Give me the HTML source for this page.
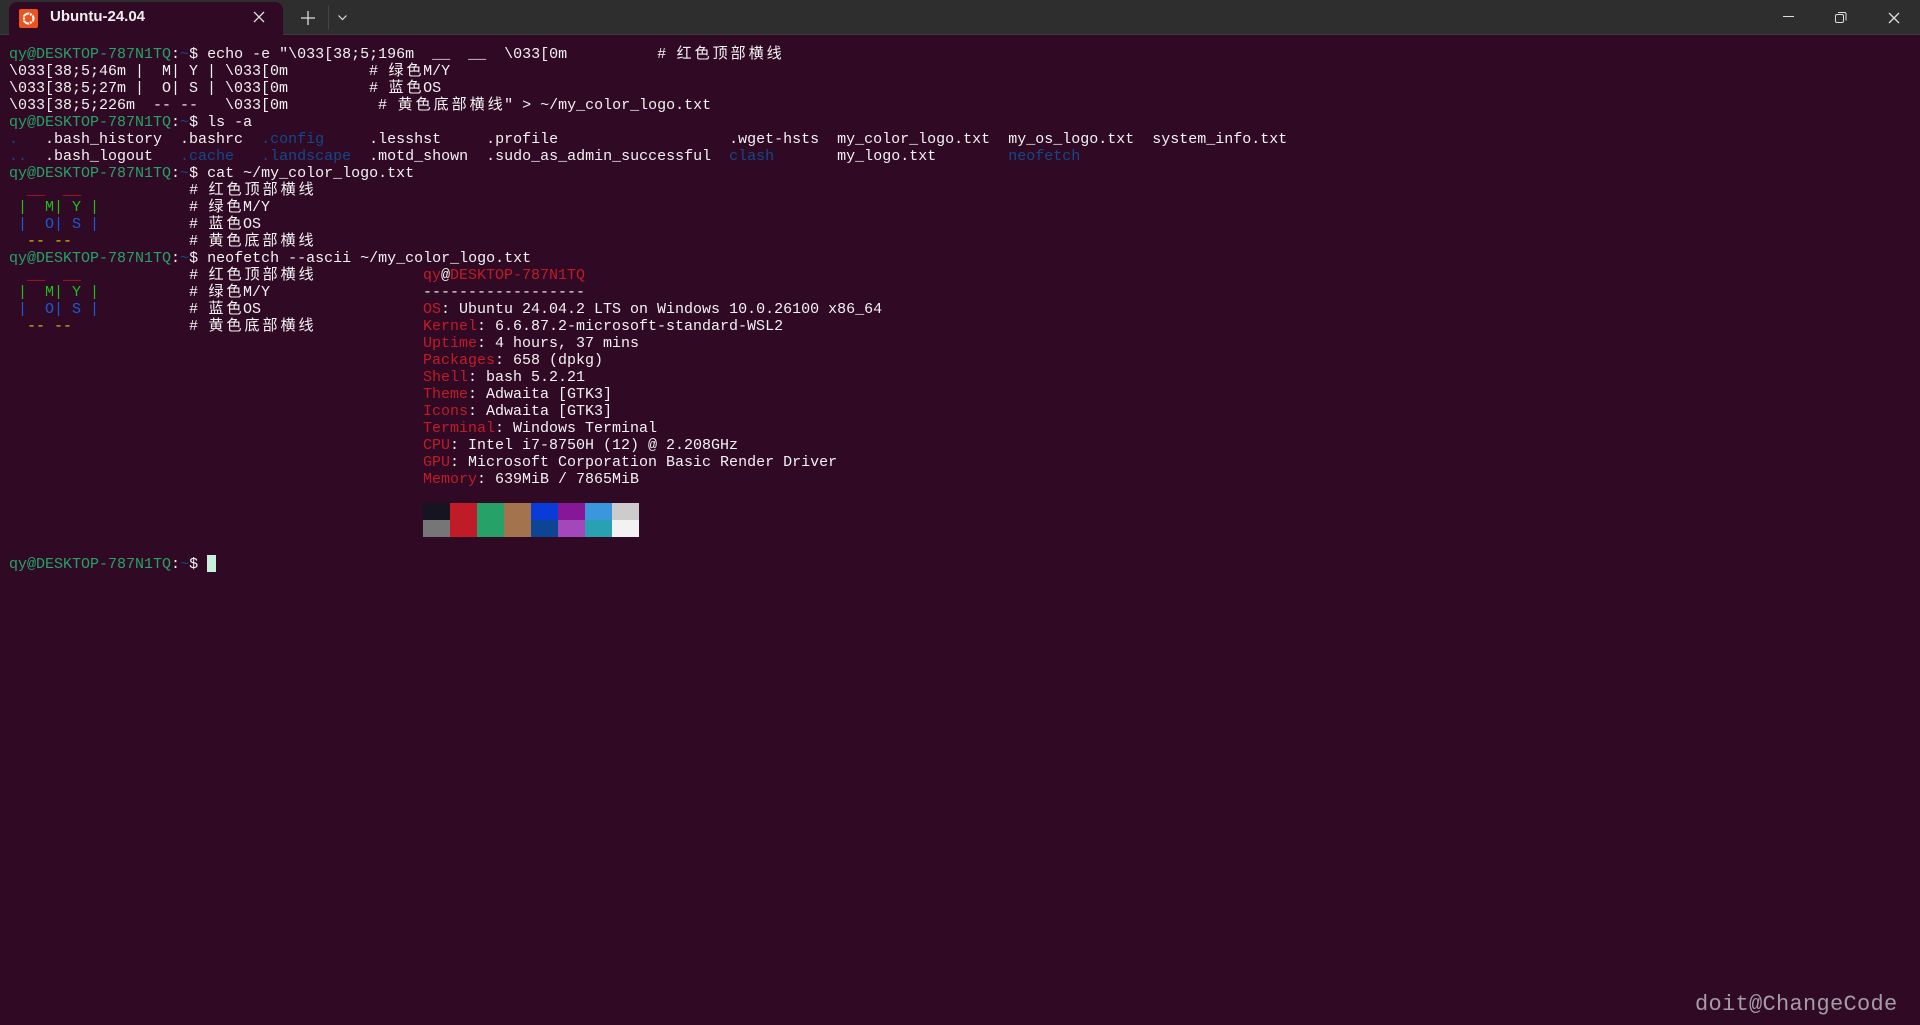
<!DOCTYPE html>
<html><head><meta charset="utf-8"><style>
*{margin:0;padding:0;box-sizing:border-box}
body{width:1920px;height:1025px;background:#300a24;overflow:hidden;position:relative;font-family:"Liberation Mono","Noto Sans CJK SC",monospace}
.bar{position:absolute;left:0;top:0;width:1920px;height:35px;background:#2e2e2e;border-bottom:1px solid #3a3a3a}
.tab{position:absolute;left:9px;top:2px;width:274px;height:34px;background:#300a24;border-radius:8px 8px 0 0}
.ico{position:absolute;left:19px;top:9px;width:19px;height:19px;background:#e95420;border-radius:2px}
.tt{position:absolute;left:50px;top:8px;font-family:"Liberation Sans",sans-serif;font-size:15px;font-weight:bold;color:#eee}
pre{position:absolute;font-family:"Liberation Mono","Noto Sans CJK SC",monospace;font-size:15px;line-height:17px;color:#f2f2f2;white-space:pre}
.g{color:#26a269}.b{color:#12488b}.r{color:#c01c28}
.c{display:inline-block;width:18px;text-align:center}
.lr{color:#c01c28}.lg{color:#1dbf1d}.lb{color:#1a5ad8}.ly{color:#d8c800}
.sw{position:absolute;width:27px;height:17px}
</style></head><body>
<div class="bar"></div>
<div class="tab"></div>
<div class="ico"><svg width="19" height="19" viewBox="0 0 19 19"><circle cx="9.5" cy="9.5" r="5" fill="none" stroke="#fff" stroke-width="2"/><circle cx="5" cy="9.5" r="1.6" fill="#fff" stroke="#e95420" stroke-width="0.8"/><circle cx="11.8" cy="5.5" r="1.6" fill="#fff" stroke="#e95420" stroke-width="0.8"/><circle cx="11.8" cy="13.5" r="1.6" fill="#fff" stroke="#e95420" stroke-width="0.8"/></svg></div>
<div class="tt">Ubuntu-24.04</div>
<svg style="position:absolute;left:253px;top:11px" width="12" height="12"><path d="M1 1L11 11M11 1L1 11" stroke="#ddd" stroke-width="1.3"/></svg>
<svg style="position:absolute;left:301px;top:11px" width="14" height="14"><path d="M7 0V14M0 7H14" stroke="#ddd" stroke-width="1.3"/></svg>
<div style="position:absolute;left:328px;top:6px;width:1px;height:24px;background:#444"></div>
<svg style="position:absolute;left:338px;top:15px" width="9" height="6"><path d="M0.5 0.5L4.5 4.5L8.5 0.5" stroke="#ddd" stroke-width="1.2" fill="none"/></svg>
<div style="position:absolute;left:1783px;top:16px;width:11px;height:1px;background:#ddd"></div>
<svg style="position:absolute;left:1835px;top:12px" width="12" height="12"><rect x="0.5" y="2.5" width="8" height="8" rx="1.5" fill="none" stroke="#ddd"/><path d="M3 0.5H9.5A1.5 1.5 0 0 1 11 2V8.5" fill="none" stroke="#ddd"/></svg>
<svg style="position:absolute;left:1888px;top:12px" width="12" height="12"><path d="M1 1L11 11M11 1L1 11" stroke="#ddd" stroke-width="1.3"/></svg>

<pre style="left:9px;top:45.5px"><span class="g">qy@DESKTOP-787N1TQ</span>:<span class="b">~</span>$ echo -e "\033[38;5;196m  __  __  \033[0m          # <span class="c">红</span><span class="c">色</span><span class="c">顶</span><span class="c">部</span><span class="c">横</span><span class="c">线</span>
\033[38;5;46m |  M| Y | \033[0m         # <span class="c">绿</span><span class="c">色</span>M/Y
\033[38;5;27m |  O| S | \033[0m         # <span class="c">蓝</span><span class="c">色</span>OS
\033[38;5;226m  -- --   \033[0m          # <span class="c">黄</span><span class="c">色</span><span class="c">底</span><span class="c">部</span><span class="c">横</span><span class="c">线</span>" &gt; ~/my_color_logo.txt
<span class="g">qy@DESKTOP-787N1TQ</span>:<span class="b">~</span>$ ls -a
<span class="b">.</span>   .bash_history  .bashrc  <span class="b">.config</span>     .lesshst     .profile                   .wget-hsts  my_color_logo.txt  my_os_logo.txt  system_info.txt
<span class="b">..</span>  .bash_logout   <span class="b">.cache</span>   <span class="b">.landscape</span>  .motd_shown  .sudo_as_admin_successful  <span class="b">clash</span>       my_logo.txt        <span class="b">neofetch</span>
<span class="g">qy@DESKTOP-787N1TQ</span>:<span class="b">~</span>$ cat ~/my_color_logo.txt
  <span class="lr">__</span>  <span class="lr">__</span>            # <span class="c">红</span><span class="c">色</span><span class="c">顶</span><span class="c">部</span><span class="c">横</span><span class="c">线</span>
<span class="lg"> |  M| Y |</span>          # <span class="c">绿</span><span class="c">色</span>M/Y
<span class="lb"> |  O| S |</span>          # <span class="c">蓝</span><span class="c">色</span>OS
  <span class="ly">-- --</span>             # <span class="c">黄</span><span class="c">色</span><span class="c">底</span><span class="c">部</span><span class="c">横</span><span class="c">线</span>
<span class="g">qy@DESKTOP-787N1TQ</span>:<span class="b">~</span>$ neofetch --ascii ~/my_color_logo.txt
  <span class="lr">__</span>  <span class="lr">__</span>            # <span class="c">红</span><span class="c">色</span><span class="c">顶</span><span class="c">部</span><span class="c">横</span><span class="c">线</span>
<span class="lg"> |  M| Y |</span>          # <span class="c">绿</span><span class="c">色</span>M/Y
<span class="lb"> |  O| S |</span>          # <span class="c">蓝</span><span class="c">色</span>OS
  <span class="ly">-- --</span>             # <span class="c">黄</span><span class="c">色</span><span class="c">底</span><span class="c">部</span><span class="c">横</span><span class="c">线</span>













<span class="g">qy@DESKTOP-787N1TQ</span>:<span class="b">~</span>$ </pre>

<pre style="left:423px;top:266.5px"><span class="r">qy</span>@<span class="r">DESKTOP-787N1TQ</span>
------------------
<span class="r">OS</span>: Ubuntu 24.04.2 LTS on Windows 10.0.26100 x86_64
<span class="r">Kernel</span>: 6.6.87.2-microsoft-standard-WSL2
<span class="r">Uptime</span>: 4 hours, 37 mins
<span class="r">Packages</span>: 658 (dpkg)
<span class="r">Shell</span>: bash 5.2.21
<span class="r">Theme</span>: Adwaita [GTK3]
<span class="r">Icons</span>: Adwaita [GTK3]
<span class="r">Terminal</span>: Windows Terminal
<span class="r">CPU</span>: Intel i7-8750H (12) @ 2.208GHz
<span class="r">GPU</span>: Microsoft Corporation Basic Render Driver
<span class="r">Memory</span>: 639MiB / 7865MiB</pre>

<div class="sw" style="left:423px;top:503px;background:#171421"></div>
<div class="sw" style="left:450px;top:503px;background:#c01c28"></div>
<div class="sw" style="left:477px;top:503px;background:#26a269"></div>
<div class="sw" style="left:504px;top:503px;background:#a2734c"></div>
<div class="sw" style="left:531px;top:503px;background:#0a3ad8"></div>
<div class="sw" style="left:558px;top:503px;background:#881798"></div>
<div class="sw" style="left:585px;top:503px;background:#3a96dd"></div>
<div class="sw" style="left:612px;top:503px;background:#cccccc"></div>
<div class="sw" style="left:423px;top:520px;background:#767676"></div>
<div class="sw" style="left:450px;top:520px;background:#c01c28"></div>
<div class="sw" style="left:477px;top:520px;background:#26a269"></div>
<div class="sw" style="left:504px;top:520px;background:#a2734c"></div>
<div class="sw" style="left:531px;top:520px;background:#0d4594"></div>
<div class="sw" style="left:558px;top:520px;background:#a347ba"></div>
<div class="sw" style="left:585px;top:520px;background:#2aa1b3"></div>
<div class="sw" style="left:612px;top:520px;background:#f2f2f2"></div>

<div style="position:absolute;left:207px;top:555px;width:9px;height:17px;background:#c8f0dc"></div>

<div style="position:absolute;left:1695px;top:993px;font-family:'Liberation Mono',monospace;font-size:22px;line-height:24px;color:#a49ca4;letter-spacing:0.3px">doit@ChangeCode</div>
</body></html>
